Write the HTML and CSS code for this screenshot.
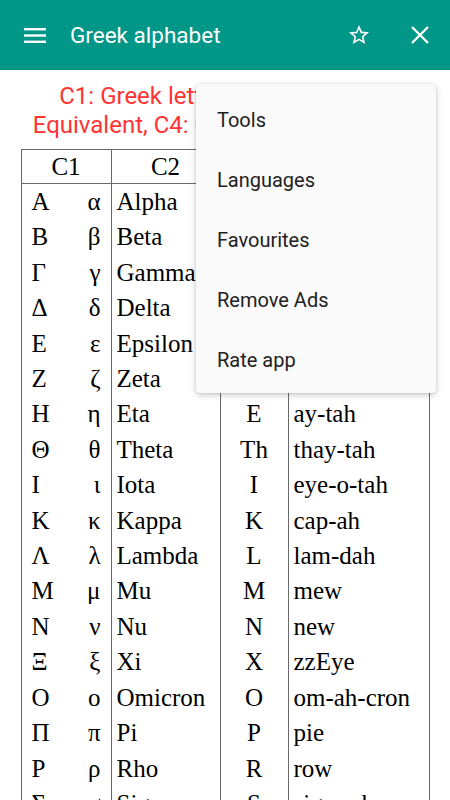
FILE: index.html
```html
<!DOCTYPE html>
<html>
<head>
<meta charset="utf-8">
<link rel="stylesheet" href="styles.css">
</head>
<body>
<header class="appbar">
  <svg class="ic-menu" width="22" height="15" viewBox="0 0 22 15"><rect x="0" y="0" width="22" height="2.4" fill="#fff"/><rect x="0" y="6.3" width="22" height="2.4" fill="#fff"/><rect x="0" y="12.6" width="22" height="2.4" fill="#fff"/></svg>
  <div class="title">Greek alphabet</div>
  <svg class="ic-star" width="24" height="24" viewBox="0 0 24 24"><path fill="#fff" d="M22 9.24l-7.19-.62L12 2 9.19 8.630 2 9.24l5.46 4.73L5.82 21 12 17.27 18.18 21l-1.63-7.03L22 9.24zM12 15.4l-3.76 2.27 1-4.28-3.32-2.88 4.38-.38L12 6.1l1.71 4.04 4.38.38-3.32 2.88 1 4.28L12 15.4z"/></svg>
  <svg class="ic-close" width="18" height="18" viewBox="0 0 18 18"><path d="M1 1L17 17M17 1L1 17" stroke="#fff" stroke-width="2.3" fill="none"/></svg>
</header>
<main class="content">
  <p class="legend"><span class="line">C1: Greek letters, C2: Name, C3</span><span class="line">Equivalent, C4: Greek Pronunciation.</span></p>
  <table class="alpha">
    <thead>
      <tr><th>C1</th><th>C2</th><th>C3</th><th>C4</th></tr>
    </thead>
    <tbody>
      <tr><td class="c1"><span>Α</span><span>α</span></td><td class="c2">Alpha</td><td class="c3">A</td><td class="c4">al-fah</td></tr>
      <tr><td class="c1"><span>Β</span><span>β</span></td><td class="c2">Beta</td><td class="c3">B</td><td class="c4">bay-tah</td></tr>
      <tr><td class="c1"><span>Γ</span><span>γ</span></td><td class="c2">Gamma</td><td class="c3">G</td><td class="c4">gam-ah</td></tr>
      <tr><td class="c1"><span>Δ</span><span>δ</span></td><td class="c2">Delta</td><td class="c3">D</td><td class="c4">del-tah</td></tr>
      <tr><td class="c1"><span>Ε</span><span>ε</span></td><td class="c2">Epsilon</td><td class="c3">E</td><td class="c4">ep-si-lon</td></tr>
      <tr><td class="c1"><span>Ζ</span><span>ζ</span></td><td class="c2">Zeta</td><td class="c3">Z</td><td class="c4">zay-tah</td></tr>
      <tr><td class="c1"><span>Η</span><span>η</span></td><td class="c2">Eta</td><td class="c3">E</td><td class="c4">ay-tah</td></tr>
      <tr><td class="c1"><span>Θ</span><span>θ</span></td><td class="c2">Theta</td><td class="c3">Th</td><td class="c4">thay-tah</td></tr>
      <tr><td class="c1"><span>Ι</span><span>ι</span></td><td class="c2">Iota</td><td class="c3">I</td><td class="c4">eye-o-tah</td></tr>
      <tr><td class="c1"><span>Κ</span><span>κ</span></td><td class="c2">Kappa</td><td class="c3">K</td><td class="c4">cap-ah</td></tr>
      <tr><td class="c1"><span>Λ</span><span>λ</span></td><td class="c2">Lambda</td><td class="c3">L</td><td class="c4">lam-dah</td></tr>
      <tr><td class="c1"><span>Μ</span><span>μ</span></td><td class="c2">Mu</td><td class="c3">M</td><td class="c4">mew</td></tr>
      <tr><td class="c1"><span>Ν</span><span>ν</span></td><td class="c2">Nu</td><td class="c3">N</td><td class="c4">new</td></tr>
      <tr><td class="c1"><span>Ξ</span><span>ξ</span></td><td class="c2">Xi</td><td class="c3">X</td><td class="c4">zzEye</td></tr>
      <tr><td class="c1"><span>Ο</span><span>ο</span></td><td class="c2">Omicron</td><td class="c3">O</td><td class="c4">om-ah-cron</td></tr>
      <tr><td class="c1"><span>Π</span><span>π</span></td><td class="c2">Pi</td><td class="c3">P</td><td class="c4">pie</td></tr>
      <tr><td class="c1"><span>Ρ</span><span>ρ</span></td><td class="c2">Rho</td><td class="c3">R</td><td class="c4">row</td></tr>
      <tr><td class="c1"><span>Σ</span><span>σ</span></td><td class="c2">Sigma</td><td class="c3">S</td><td class="c4">sig-mah</td></tr>
      <tr><td class="c1"><span>Τ</span><span>τ</span></td><td class="c2">Tau</td><td class="c3">T</td><td class="c4">taw</td></tr>
    </tbody>
  </table>
</main>
<nav class="popup">
  <div class="item">Tools</div>
  <div class="item">Languages</div>
  <div class="item">Favourites</div>
  <div class="item">Remove Ads</div>
  <div class="item">Rate app</div>
</nav>
</body>
</html>
```
FILE: styles.css
```css
html, body {
  margin: 0;
  padding: 0;
  background: #ffffff;
}
body {
  font-family: Roboto, "Noto Sans", sans-serif;
  position: relative;
  overflow: hidden;
  height: 800px;
}
.appbar {
  height: 70px;
  background: #009688;
  display: flex;
  align-items: center;
  padding: 0 21px 0 24px;
  box-sizing: border-box;
}
.ic-menu {
  flex: none;
  margin-right: 24px;
}
.title {
  flex: 1;
  color: #ffffff;
  font-size: 22.5px;
  letter-spacing: 0;
}
.ic-star {
  flex: none;
  margin-right: 40px;
}
.ic-close {
  flex: none;
}
.content {
  padding-top: 12px;
}
.legend {
  margin: 0 0 9px;
  color: #ff3333;
  font-size: 24px;
  line-height: 29px;
  text-align: center;
}
.legend .line {
  display: block;
  white-space: nowrap;
}
.alpha {
  border-collapse: collapse;
  margin: 0 auto;
  width: 409px;
  table-layout: fixed;
  font-family: "Liberation Serif", "Times New Roman", serif;
  font-size: 25px;
  color: #000;
}
.alpha th, .alpha td {
  padding: 0;
  border-left: 1px solid #6a6a6a;
  border-right: 1px solid #6a6a6a;
}
.alpha th {
  font-weight: normal;
  height: 33px;
  line-height: 33px;
  border-top: 1px solid #6a6a6a;
  border-bottom: 1px solid #6a6a6a;
  text-align: center;
}
.alpha th:nth-child(1) { width: 89px; }
.alpha th:nth-child(2) { width: 108px; }
.alpha th:nth-child(3) { width: 67px; }
.alpha td {
  height: 35.4px;
  line-height: 35.4px;
  white-space: nowrap;
}
.alpha td.c1 span:first-child {
  float: left;
  padding-left: 10px;
}
.alpha td.c1 span:last-child {
  float: right;
  padding-right: 10px;
}
.alpha td.c2 { padding-left: 5px; }
.alpha td.c3 { text-align: center; }
.alpha td.c4 { padding-left: 5px; }
.popup {
  position: absolute;
  left: 196px;
  top: 84px;
  width: 240px;
  box-sizing: border-box;
  padding: 6px 0 3px;
  background: #fafafa;
  border-radius: 4px;
  box-shadow: 0 2px 6px rgba(0,0,0,0.22), 0 0 2px rgba(0,0,0,0.12);
}
.popup .item {
  height: 60px;
  line-height: 60px;
  padding-left: 21px;
  font-size: 20px;
  color: #212121;
}
```
